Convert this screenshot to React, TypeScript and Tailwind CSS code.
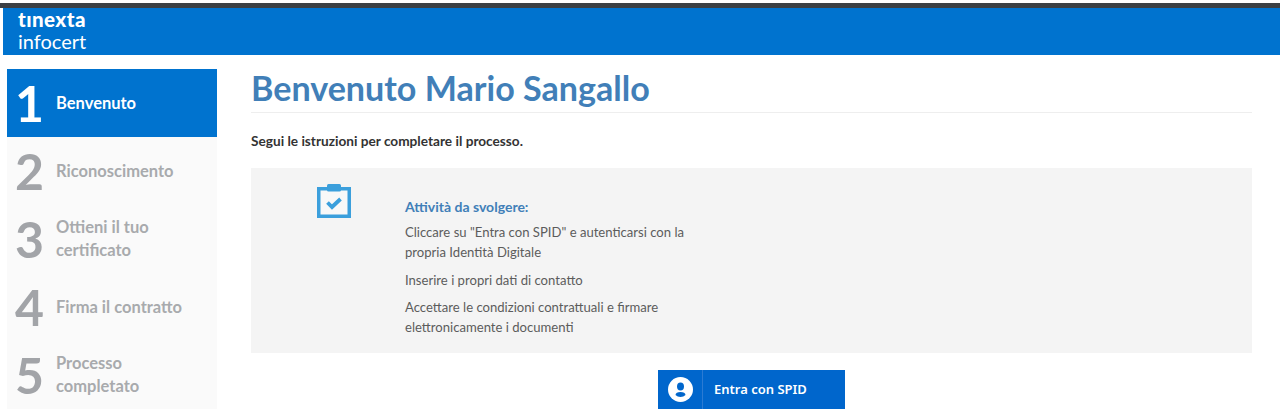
const steps = [
  { n: "1", label: ["Benvenuto"], active: true },
  { n: "2", label: ["Riconoscimento"] },
  { n: "3", label: ["Ottieni il tuo", "certificato"] },
  { n: "4", label: ["Firma il contratto"] },
  { n: "5", label: ["Processo", "completato"] },
];

function ClipboardIcon() {
  return (
    <svg width="34" height="34" viewBox="0 0 34 34" className="block">
      <rect x="1.75" y="4.75" width="30.5" height="27.5" fill="#f8f8f8" stroke="#3b9fdc" strokeWidth="3.5" />
      <rect x="10" y="0" width="14" height="7.5" rx="1.5" fill="#3b9fdc" />
      <path d="M10.500 18.500l4.500 4.500 8.500-8" fill="none" stroke="#3b9fdc" strokeWidth="3.8" />
    </svg>
  );
}

function UserIcon() {
  return (
    <svg width="25" height="25" viewBox="0 0 25 25" className="block">
      <circle cx="12.5" cy="12.5" r="12.5" fill="#ffffff" />
      <ellipse cx="12.5" cy="9.5" rx="3.500" ry="4" fill="#0066cc" />
      <path d="M7.500 18c0-2 2-3 5-3s5 1 5 3c-1.300 1.300-3 2-5 2s-3.700-.7-5-2z" fill="#0066cc" />
    </svg>
  );
}

export default function App() {
  return (
    <div className="w-[1280px] h-[420px] overflow-hidden bg-white pt-[3px] font-['Lato',sans-serif]">
      <div className="h-[5px] bg-[#3c3f43]" />
      <div className="ml-[3px] h-[47px] bg-[#0073cf] pl-[15px] text-white">
        <div className="h-[20px] pt-[3px] text-[20.5px] leading-[16px] font-black tracking-[0.45px]">tınexta</div>
        <div className="text-[20px] leading-[26px] font-normal">infocert</div>
      </div>

      <div className="flex pl-[7px] pt-[14px]">
        <div className="w-[210px] h-[340px] bg-[#fafafa] shrink-0">
          {steps.map((s) => (
            <div
              key={s.n}
              className={
                s.active
                  ? "h-[68px] flex items-center bg-[#0073cf] text-white"
                  : "h-[68px] flex items-center text-[#a2a4a8]"
              }
            >
              <div className="w-[49px] pl-[8px] text-[50px] leading-none font-bold">{s.n}</div>
              <div
                className={
                  s.active
                    ? "text-[16.5px] leading-[23px] font-bold"
                    : "text-[16.5px] leading-[23px] font-bold text-[#a8aaad]"
                }
              >
                {s.label.map((l) => (
                  <div key={l}>{l}</div>
                ))}
              </div>
            </div>
          ))}
        </div>

        <div className="ml-[34px] w-[1001px]">
          <div className="h-[45px] -mt-px border-b border-[#eeeeee] text-[34.1px] leading-[40px] font-bold text-[#417fb8]">
            Benvenuto Mario Sangallo
          </div>
          <p className="mt-[18px] text-[13.65px] leading-[20px] font-bold text-[#333333]">
            Segui le istruzioni per completare il processo.
          </p>
          <div className="mt-[17px] h-[185px] bg-[#f4f4f4] flex">
            <div className="w-[154px] pl-[66px] pt-[16px] shrink-0">
              <ClipboardIcon />
            </div>
            <div className="w-[290px] pt-[29px] text-[13.1px] leading-[20px] text-[#5c5c5c]">
              <p className="text-[14px] font-bold text-[#417fb8]">Attività da svolgere:</p>
              <p className="mt-[5px]">Cliccare su "Entra con SPID" e autenticarsi con la propria Identità Digitale</p>
              <p className="mt-[8px]">Inserire i propri dati di contatto</p>
              <p className="mt-[7px]">Accettare le condizioni contrattuali e firmare elettronicamente i documenti</p>
            </div>
          </div>
          <div className="mt-[17px] flex justify-center">
            <button className="w-[187px] h-[39px] bg-[#0066cc] flex items-center text-white">
              <span className="w-[45px] h-full flex items-center justify-center border-r border-[#2b7bd3]">
                <UserIcon />
              </span>
              <span className="pl-[11px] text-[13px] font-semibold font-['Noto_Sans',sans-serif]">Entra con SPID</span>
            </button>
          </div>
        </div>
      </div>
    </div>
  );
}
